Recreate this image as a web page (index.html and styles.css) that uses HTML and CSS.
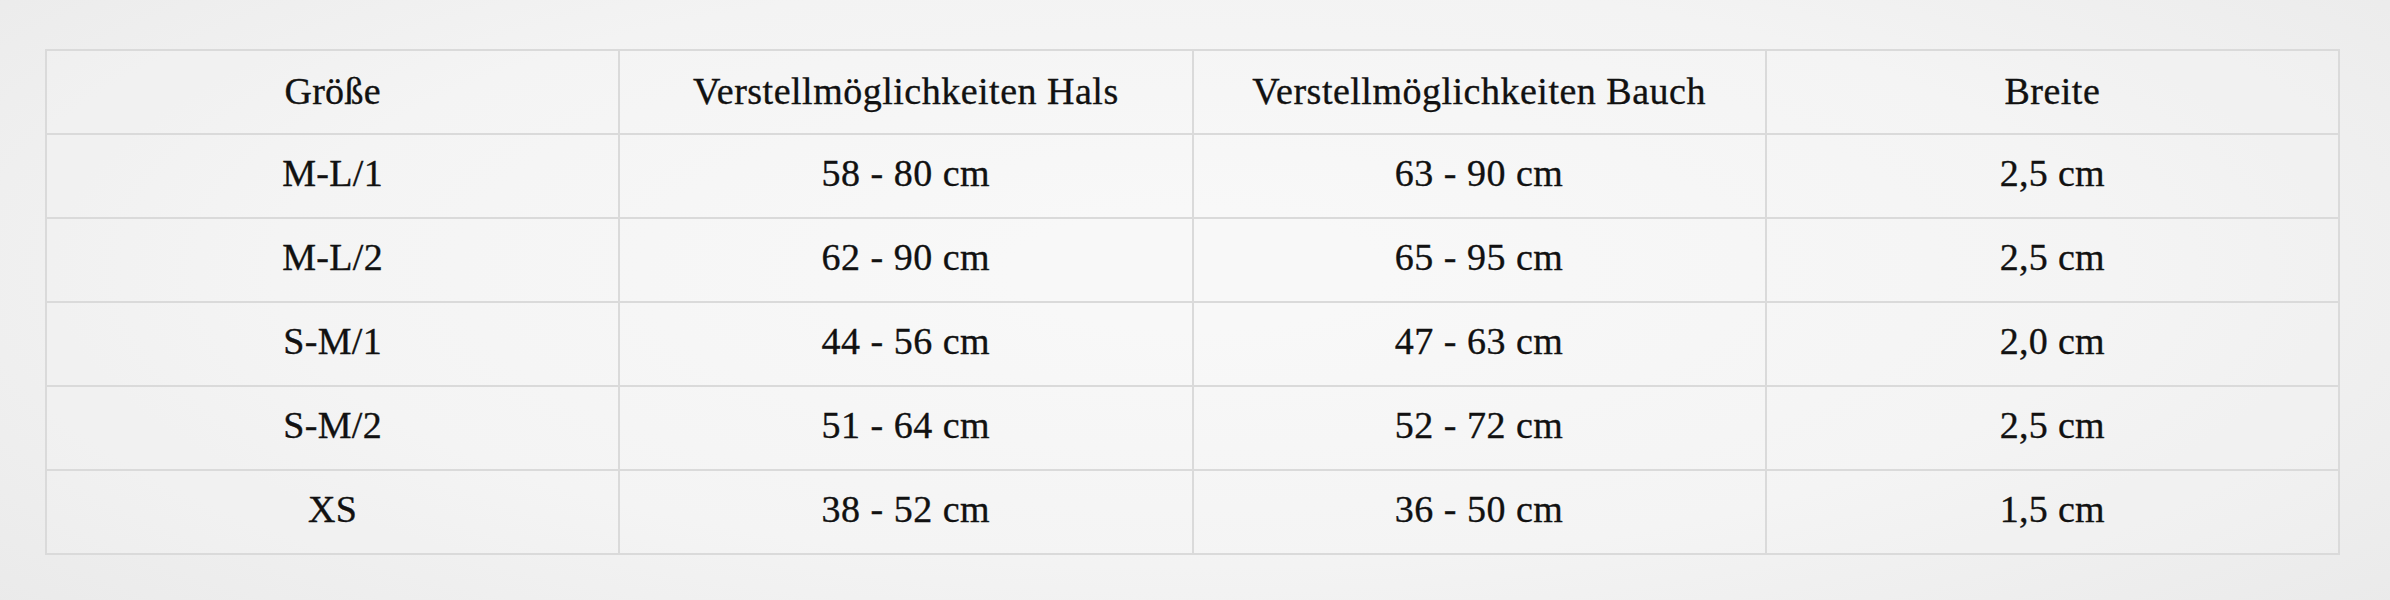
FILE: index.html
```html
<!DOCTYPE html>
<html lang="de">
<head>
<meta charset="utf-8">
<title>Größentabelle</title>
<link rel="stylesheet" href="styles.css">
</head>
<body>
<div class="page">
  <table class="sizes">
    <thead>
      <tr>
        <th class="c-size">Größe</th>
        <th>Verstellmöglichkeiten Hals</th>
        <th>Verstellmöglichkeiten Bauch</th>
        <th>Breite</th>
      </tr>
    </thead>
    <tbody>
      <tr><td class="c-size">M-L/1</td><td>58 - 80 cm</td><td>63 - 90 cm</td><td class="c-width">2,5 cm</td></tr>
      <tr><td class="c-size">M-L/2</td><td>62 - 90 cm</td><td>65 - 95 cm</td><td class="c-width">2,5 cm</td></tr>
      <tr><td class="c-size">S-M/1</td><td>44 - 56 cm</td><td>47 - 63 cm</td><td class="c-width">2,0 cm</td></tr>
      <tr><td class="c-size">S-M/2</td><td>51 - 64 cm</td><td>52 - 72 cm</td><td class="c-width">2,5 cm</td></tr>
      <tr><td class="c-size">XS</td><td>38 - 52 cm</td><td>36 - 50 cm</td><td class="c-width">1,5 cm</td></tr>
    </tbody>
  </table>
</div>
</body>
</html>
```
FILE: styles.css
```css
html, body {
  margin: 0;
  padding: 0;
}
body {
  width: 2390px;
  height: 600px;
  overflow: hidden;
  background: radial-gradient(ellipse 70% 90% at 50% 45%, #f8f8f8 0%, #f3f3f3 55%, #e9e9e9 100%);
  font-family: "Liberation Serif", "Times New Roman", serif;
  color: #111111;
}
.page {
  padding: 49px 0 0 45px;
}
.sizes {
  border-collapse: collapse;
  table-layout: fixed;
  width: 2295px;
}
.sizes th,
.sizes td {
  border: 2px solid #dadada;
  text-align: center;
  vertical-align: middle;
  font-size: 38px;
  font-weight: normal;
  letter-spacing: 0.5px;
  -webkit-text-stroke: 0.35px #111111;
  background: rgba(255, 255, 255, 0.12);
}
.sizes th {
  height: 79px;
  padding: 0 0 3px;
}
.sizes td {
  height: 76px;
  padding: 0 0 6px;
}
.sizes .c-size,
.sizes .c-width {
  letter-spacing: 0.3px;
}
```
